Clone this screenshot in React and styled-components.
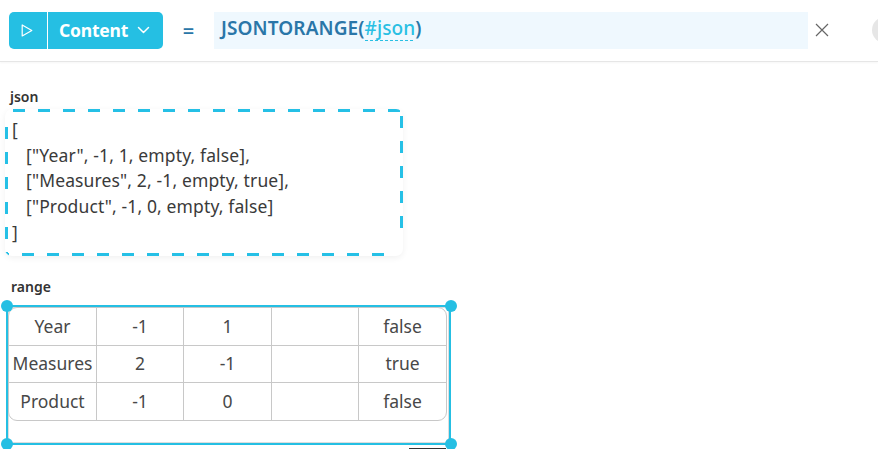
import React from "react";
import styled, { createGlobalStyle } from "styled-components";

const Global = createGlobalStyle`
  html, body { margin: 0; padding: 0; background: #fff; }
  body { font-family: "Noto Sans", "Open Sans", sans-serif; color: #333; overflow: hidden; }
  * { box-sizing: border-box; }
`;
const Page = styled.div`width: 878px; height: 449px; overflow: hidden;`;
const Toolbar = styled.header`
  height: 62px; display: flex; align-items: center; padding: 0 0 1px 9px; overflow: hidden;
  border-bottom: 1px solid #e6e6e6; box-shadow: 0 1px 2px rgba(0,0,0,.04);
`;
const RunGroup = styled.div`
  width: 154px; height: 37px; display: flex; flex-shrink: 0; background: #25bfe3; border-radius: 5px; color: #fff;
`;
const PlayCell = styled.div`
  width: 39px; display: flex; align-items: center; justify-content: center; border-right: 1px solid #fff; padding-right: 3px;
`;
const ModeCell = styled.div`
  flex: 1; display: flex; align-items: center; padding-left: 11px; gap: 9px;
  font-size: 17.5px; font-weight: 700; letter-spacing: -0.2px;
`;
const Equals = styled.div`
  width: 51px; flex-shrink: 0; text-align: center; color: #2a76a8; font-size: 20px; font-weight: 600;
`;
const Formula = styled.div`
  width: 594px; height: 37px; flex-shrink: 0; background: #eff8fe; padding: 0 0 5px 7px; display: flex; align-items: center;
  font-size: 19px; font-weight: 600; color: #2a76a8; letter-spacing: 0.1px;
`;
const Ref = styled.span`
  color: #29bfe3; font-weight: 500; line-height: 23px; margin-bottom: -2px;
  background-image: repeating-linear-gradient(90deg, #29bfe3 0 3px, transparent 3px 5px);
  background-repeat: no-repeat; background-size: 100% 1px; background-position: 0 100%; padding-bottom: 1px;
`;
const CloseBtn = styled.div`
  width: 28px; flex-shrink: 0; display: flex; justify-content: center; color: #666;
`;
const Avatar = styled.div`
  width: 26px; height: 26px; border-radius: 50%; background: #e6e6e6; flex-shrink: 0; margin-left: 36px;
`;
const Field = styled.section`margin: ${p => p.$top}px 0 0 5px;`;
const Label = styled.div`
  height: 20px; line-height: 20px; padding-left: ${p => p.$inset}px; margin-bottom: ${p => p.$gap}px; font-size: 14px; font-weight: 600; color: #333;
`;
const dash = "#25c0e6";
const JsonBox = styled.div`
  width: 398px; height: 147px; padding: 8px 0 0 7px; border-radius: 7px; box-shadow: 0 2px 6px rgba(0,0,0,.06);
  background-color: #fff;
  background-image:
    repeating-linear-gradient(90deg, ${dash} 0 12px, transparent 12px 25px),
    repeating-linear-gradient(90deg, ${dash} 0 12px, transparent 12px 25px),
    repeating-linear-gradient(180deg, ${dash} 0 12px, transparent 12px 25px),
    repeating-linear-gradient(180deg, ${dash} 0 12px, transparent 12px 25px);
  background-repeat: no-repeat;
  background-size: 100% 3px, 100% 3px, 3px 100%, 3px 100%;
  background-position: 8px 0, -8px 100%, 0 18px, 100% -18px;
`;
const CodeLine = styled.div`
  height: 25.7px; line-height: 25.7px; font-size: 17.5px; letter-spacing: 0.13px; color: #3a3a3a; padding-left: ${p => p.$indent ? 14 : 0}px; white-space: nowrap;
`;
const Selection = styled.div`
  position: relative; margin-left: 1px; width: 445px; height: 140px; border: 2px solid #25bfe3; box-shadow: inset 0 0 0 1px #ddd;
`;
const Handle = styled.span`
  position: absolute; width: 12px; height: 12px; border-radius: 50%; background: #25bfe3;
  ${p => p.$x}: -7.5px; ${p => p.$y}: -7px;
`;
const Grid = styled.div`
  display: grid; grid-template-columns: 88px 87px 88px 87px 87px; grid-template-rows: 38px 37px 37px;
  width: 439px; height: 114px; border: 1px solid #c8c8c8; border-radius: 9px; background: #fff;
`;
const Cell = styled.div`
  display: flex; align-items: center; justify-content: center; font-size: 17.5px; color: #484848; padding-bottom: 2px; white-space: nowrap;
  border-right: ${p => p.$lastCol ? "0" : "1px solid #c8c8c8"};
  border-bottom: ${p => p.$lastRow ? "0" : "1px solid #c8c8c8"};
`;
const Underbar = styled.div`
  width: 37px; height: 1px; margin: 3px 0 0 404px; background: #333;
`;

const rows = [
  ["Year", "-1", "1", "", "false"],
  ["Measures", "2", "-1", "", "true"],
  ["Product", "-1", "0", "", "false"],
];

export default function App() {
  return (
    <Page>
      <Global />
      <Toolbar>
        <RunGroup>
          <PlayCell>
            <svg width="12" height="13" viewBox="0 0 12 13" fill="none" stroke="#fff" strokeWidth="1.2" strokeLinejoin="round">
              <path d="M1.2 1v11L10.8 6.5z" />
            </svg>
          </PlayCell>
          <ModeCell>
            Content
            <svg width="13" height="8" viewBox="0 0 13 8" fill="none" stroke="#fff" strokeWidth="1.5" strokeLinecap="round" strokeLinejoin="round">
              <path d="M1.5 1.5l5 5 5-5" />
            </svg>
          </ModeCell>
        </RunGroup>
        <Equals>=</Equals>
        <Formula>
          JSONTORANGE(<Ref>#json</Ref>)
        </Formula>
        <CloseBtn>
          <svg width="14" height="14" viewBox="0 0 14 14" fill="none" stroke="#666" strokeWidth="1.2">
            <path d="M1 1l12 12M13 1L1 13" />
          </svg>
        </CloseBtn>
        <Avatar />
      </Toolbar>
      <Field $top={25}>
        <Label $inset={5} $gap={2}>json</Label>
        <JsonBox>
          <CodeLine>[</CodeLine>
          <CodeLine $indent>["Year", -1, 1, empty, false],</CodeLine>
          <CodeLine $indent>["Measures", 2, -1, empty, true],</CodeLine>
          <CodeLine $indent>["Product", -1, 0, empty, false]</CodeLine>
          <CodeLine>]</CodeLine>
        </JsonBox>
      </Field>
      <Field $top={21}>
        <Label $inset={6} $gap={8}>range</Label>
        <Selection>
          <Handle $x="left" $y="top" />
          <Handle $x="right" $y="top" />
          <Handle $x="left" $y="bottom" />
          <Handle $x="right" $y="bottom" />
          <Grid>
            {rows.map((row, r) =>
              row.map((v, c) => (
                <Cell key={r + "-" + c} $lastCol={c === 4} $lastRow={r === 2}>{v}</Cell>
              ))
            )}
          </Grid>
        </Selection>
        <Underbar />
      </Field>
    </Page>
  );
}
